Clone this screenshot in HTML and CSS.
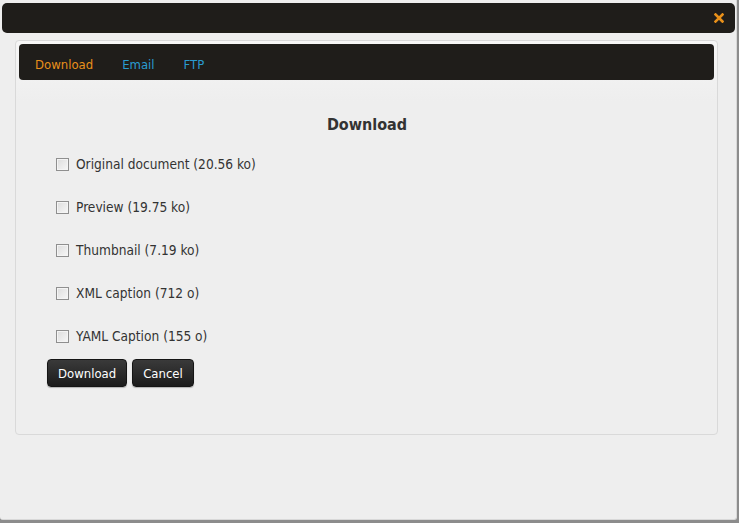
FILE: index.html
```html
<!DOCTYPE html>
<html lang="en">
<head>
<meta charset="utf-8">
<title>Download</title>
<link rel="stylesheet" href="styles.css">
</head>
<body>
<div class="window">
  <div class="titlebar">
    <svg class="close" width="10" height="10" viewBox="0 0 10 10" aria-label="Close">
      <path d="M1.5 1.5 L8.5 8.5 M8.5 1.5 L1.5 8.5" stroke="#e8901a" stroke-width="2.6" stroke-linecap="square"/>
    </svg>
  </div>
  <div class="panel">
    <nav class="tabs">
      <a class="tab active">Download</a>
      <a class="tab">Email</a>
      <a class="tab">FTP</a>
    </nav>
    <div class="content">
      <h2 class="heading">Download</h2>
      <ul class="files">
        <li class="file"><span class="box"></span><span>Original document (20.56 ko)</span></li>
        <li class="file"><span class="box"></span><span>Preview (19.75 ko)</span></li>
        <li class="file"><span class="box"></span><span>Thumbnail (7.19 ko)</span></li>
        <li class="file"><span class="box"></span><span>XML caption (712 o)</span></li>
        <li class="file"><span class="box"></span><span>YAML Caption (155 o)</span></li>
      </ul>
      <div class="actions">
        <button class="btn">Download</button>
        <button class="btn">Cancel</button>
      </div>
    </div>
  </div>
</div>
</body>
</html>
```
FILE: styles.css
```css
* { box-sizing: border-box; }
html, body { margin: 0; padding: 0; }
body {
  width: 739px;
  height: 523px;
  background: #8c8c8c;
  font-family: "DejaVu Sans Condensed", "DejaVu Sans", sans-serif;
  font-size: 13.6px;
  color: #333;
  overflow: hidden;
}
.window {
  width: 737px;
  height: 520px;
  background: #eeeeee;
  border-right: 1px solid #d8d8d8;
  border-bottom: 1px solid #d8d8d8;
  border-radius: 0 0 3px 3px;
  padding: 3px 1px 0 2px;
}
.titlebar {
  height: 30px;
  background: #1f1d1a;
  border-radius: 5px;
  display: flex;
  align-items: center;
  justify-content: flex-end;
  padding-right: 11px;
}
.close { display: block; }
.panel {
  margin: 7px 17px 0 13px;
  height: 395px;
  border: 1px solid #d9d9d9;
  border-radius: 4px;
  background: linear-gradient(#f6f6f6, #eeeeee 60px);
  padding: 3px;
}
.tabs {
  height: 36px;
  background: #1f1d1a;
  border-radius: 4px;
  display: flex;
  align-items: center;
  padding: 5px 0 0 16px;
  gap: 29px;
}
.tab {
  font-size: 13px;
  color: #2a9bd0;
  line-height: 16px;
}
.tab.active { color: #e8901a; }
.content {
  padding: 35px 0 0 28px;
}
.heading {
  margin: 0 0 19px;
  text-align: center;
  font-size: 16px;
  line-height: 20px;
  font-weight: bold;
  color: #333;
  padding-right: 27px;
}
.files {
  list-style: none;
  margin: 0;
  padding: 0 0 0 9px;
  display: flex;
  flex-direction: column;
  gap: 23px;
}
.file {
  display: flex;
  align-items: center;
  gap: 7px;
  line-height: 20px;
  height: 20px;
}
.box {
  width: 13px;
  height: 13px;
  border: 1px solid #8f8f8f;
  background: linear-gradient(135deg, #dcdcdc, #f7f7f7);
  box-shadow: inset 0 0 0 1px #f4f4f4;
}
.actions {
  margin-top: 13px;
  display: flex;
  gap: 5px;
}
.btn {
  height: 28px;
  padding: 0 10px;
  border: 1px solid #151515;
  border-radius: 4px;
  background: linear-gradient(#3a3a3a, #1c1c1c);
  color: #fff;
  font-family: inherit;
  font-size: 13px;
  box-shadow: 0 1px 1px rgba(0,0,0,0.25);
}
```
